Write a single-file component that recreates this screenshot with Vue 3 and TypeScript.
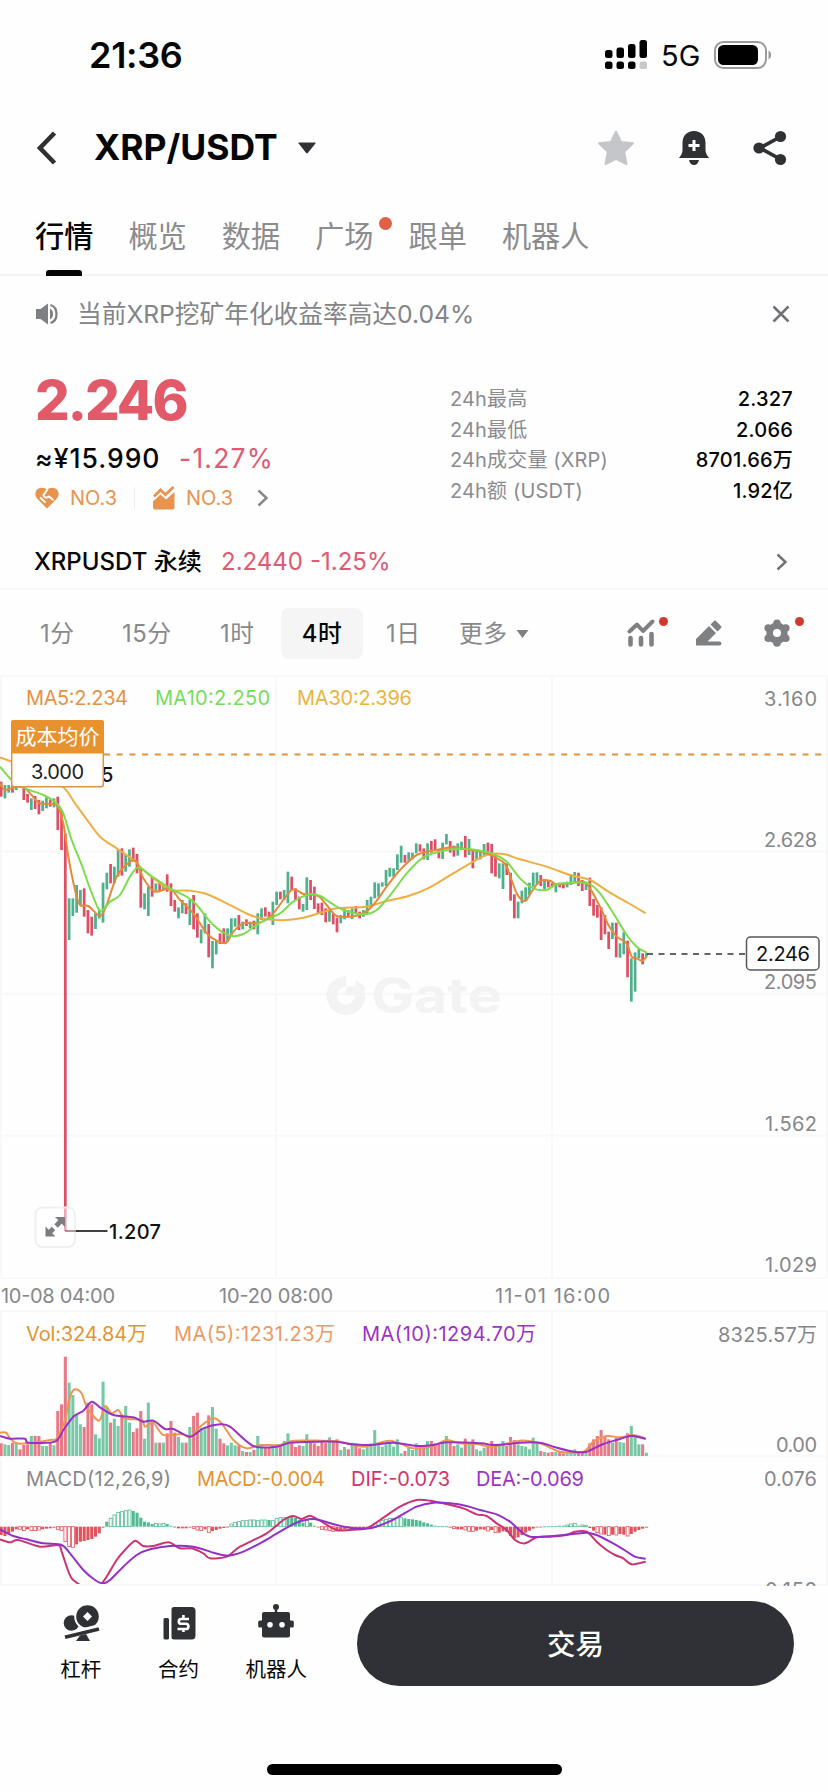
<script setup lang="ts">
type Point = [number, number]

interface Candle {
  x: number
  high: number
  low: number
  up: boolean
  volume: number
}

interface Label {
  text: string
  x: number
  y: number
  width: number
  tone: string
}

const tabs = [
  { name: '行情', active: true, dot: false },
  { name: '概览', active: false, dot: false },
  { name: '数据', active: false, dot: false },
  { name: '广场', active: false, dot: true },
  { name: '跟单', active: false, dot: false },
  { name: '机器人', active: false, dot: false },
]

const stats = [
  { label: '24h最高', value: '2.327' },
  { label: '24h最低', value: '2.066' },
  { label: '24h成交量 (XRP)', value: '8701.66万' },
  { label: '24h额 (USDT)', value: '1.92亿' },
]

const frames = ['1分', '15分', '1时', '4时', '1日']
const activeFrame = '4时'

// One entry per 4h candle: high, low, direction, volume. Units are thirds of a pixel.
const rawCandles =
  '335 380 r 38|345 385 g 35|345 368 g 33|335 368 r 40|340 360 g 38|340 352 r 20|345 390 r 33|372 398 r 35|385 420 g 60|378 417 r 60|' +
  '390 433 r 60|392 423 g 30|382 415 g 30|388 410 r 40|385 412 g 32|380 480 r 135|420 540 r 155|490 1683 r 298|685 810 g 220|685 738 g 183|' +
  '645 728 g 125|660 705 g 95|655 740 r 87|720 790 r 160|740 797 r 155|730 777 g 65|720 745 g 53|638 758 g 223|608 658 g 147|582 640 r 100|' +
  '590 640 g 112|540 620 g 90|535 617 r 120|555 605 g 150|538 590 g 100|533 575 r 72|552 610 r 83|595 713 r 135|670 718 g 52|650 738 g 160|' +
  '620 680 r 105|640 662 g 40|638 663 r 40|645 662 g 40|613 665 r 68|640 708 r 105|690 725 r 70|712 745 g 57|690 730 g 40|700 732 r 40|' +
  '690 765 g 87|675 778 r 120|730 803 r 130|778 820 g 85|730 790 g 85|762 862 r 122|813 895 g 147|812 853 g 82|790 822 r 52|775 822 r 38|' +
  '775 815 g 32|745 797 g 40|745 770 g 32|735 780 r 32|755 778 g 15|748 768 r 12|755 775 g 12|752 778 r 18|730 793 g 60|715 750 g 35|' +
  '712 740 r 25|725 745 r 25|695 765 g 30|665 705 g 35|665 688 r 35|660 690 g 45|605 700 g 68|620 660 r 38|655 690 r 27|680 718 r 32|' +
  '702 725 g 30|622 720 g 65|630 690 r 40|650 717 r 38|700 730 r 30|698 735 r 42|715 757 r 40|720 755 g 56|730 763 r 45|743 787 r 50|' +
  '735 760 g 18|715 748 g 27|720 742 r 20|715 747 g 40|708 732 r 38|725 745 r 23|720 740 g 20|690 732 g 35|680 710 g 38|637 685 g 78|' +
  '640 680 g 32|637 650 g 28|600 648 g 35|593 620 g 40|595 620 g 28|553 600 g 50|527 578 g 8|555 578 r 15|547 575 g 25|548 568 g 18|' +
  '520 550 g 38|523 545 r 30|535 568 r 32|520 570 g 45|513 548 r 45|508 540 r 38|537 565 r 35|518 567 g 42|492 523 g 60|513 548 r 42|' +
  '527 560 r 30|520 557 g 35|515 540 g 25|498 562 r 52|507 555 g 38|538 595 r 50|545 570 g 20|540 568 g 15|522 560 g 25|518 550 r 32|' +
  '522 610 r 45|555 620 r 30|580 625 g 30|580 657 g 45|580 615 r 30|608 692 r 57|673 745 r 48|695 745 g 35|662 700 g 30|652 690 g 28|' +
  '638 675 g 20|608 650 g 55|607 645 g 40|615 648 r 15|630 658 g 12|630 652 r 10|640 652 r 12|640 667 g 12|640 652 r 12|640 655 r 8|' +
  '635 652 g 12|612 645 g 18|606 638 g 20|608 648 r 15|630 663 r 15|635 660 g 15|623 708 r 38|687 737 r 50|705 743 r 60|712 810 r 78|' +
  '735 793 r 60|785 837 r 50|758 807 g 40|758 862 r 55|820 863 g 42|787 853 g 40|812 922 r 68|865 995 g 90|847 965 g 60|837 865 g 35|' +
  '850 883 r 35|848 860 g 10'

const step = 11.32
const candles: Candle[] = rawCandles.split('|').map((row, i) => {
  const [high, low, side, volume] = row.split(' ')
  return { x: 3.5 + i * step, high: +high, low: +low, up: side === 'g', volume: +volume }
})

// MACD columns; a trailing h marks a hollow column.
const rawMacd =
  '-25 -28 -22 -15 -8 -8h -12h -8 -12h -12h -10h -8 -6 -5 -3 -8h -12h -45h -60h -62h -53 -45 -43 -40 -37 -30 -20 -3 ' +
  '15 25h 35h 43h 45h 48h 50h 47 42 27 15 13 8 10h 8h 10h 8 3 -1 -5 -5 -5 0 -5h -10h -12h -8 -17h -13 -10 -6 -4 0 ' +
  '8h 13h 15h 18h 18h 20h 20h 18h 20h 20h 20 18h 25h 27h 27h 28 30 27 20 12 18h 12 3 0 -8h -10h -12h -14h -14 -10 ' +
  '-8 -8h -8 -6 -5 -4 -3 3 10h 15h 18h 22h 25h 25h 27h 27h 25 23 22 20 18 13 10 6 3 1 1 1 -3 -6h -8 -8 -10h -14h ' +
  '-14h -12 -8 -9 -13h -10 -18h -18 -14 -16 -28 -36 -32 -25 -18 -12 -6 -2 -1 1 1 2 2 3 3 5h 8h 10h 3 5h 4h -4 -12 ' +
  '-18h -22h -24 -27h -24 -25h -22 -24 -28h -22 -15 -10 -6 -3'

const macd = rawMacd.split(' ').map((cell, i) => ({
  x: 3.5 + i * step,
  value: parseInt(cell, 10),
  hollow: cell.endsWith('h'),
}))

function parse(source: string): Point[] {
  return source.split(';').map((p) => p.split(',').map(Number) as Point)
}

// Smooths a list of points with a Catmull-Rom spline.
function curve(source: string): string {
  const p = parse(source)
  let d = `M${p[0][0]} ${p[0][1]}`
  for (let i = 0; i < p.length - 1; i++) {
    const a = p[Math.max(0, i - 1)]
    const b = p[i]
    const c = p[i + 1]
    const e = p[Math.min(p.length - 1, i + 2)]
    d += `C${b[0] + (c[0] - a[0]) / 7} ${b[1] + (c[1] - a[1]) / 7} ${c[0] - (e[0] - b[0]) / 7} ${c[1] - (e[1] - b[1]) / 7} ${c[0]} ${c[1]}`
  }
  return d
}

const ma5 = curve(
  '0,340;15,360;50,350;75,355;95,375;120,400;170,405;190,460;205,560;225,660;240,705;265,708;300,738;320,705;350,620;390,575;410,575;430,625;465,665;510,655;540,690;580,730;625,795;675,820;700,785;730,760;780,758;820,730;875,660;910,672;945,675;960,682;980,705;1010,738;1050,740;1090,730;1120,705;1160,650;1200,600;1250,555;1310,540;1360,532;1410,540;1460,550;1500,570;1520,590;1550,670;1575,693;1595,665;1620,633;1650,632;1670,643;1720,638;1750,635;1770,655;1800,710;1825,765;1850,800;1880,820;1895,860;1910,865;1927,872;1940,860',
)
const ma10 = curve(
  '0,290;35,330;75,355;130,375;170,400;190,430;215,510;245,585;270,655;300,722;330,695;360,675;390,620;415,592;450,615;510,655;560,680;590,705;640,765;690,797;730,792;780,758;840,730;880,695;930,673;960,678;995,700;1030,720;1090,733;1130,720;1175,670;1220,610;1270,562;1330,542;1380,536;1430,540;1480,552;1520,575;1560,625;1600,655;1640,660;1670,642;1720,638;1765,640;1800,670;1840,730;1880,795;1910,830;1940,848',
)
const ma30 = curve(
  '0,262;35,275;110,305;190,352;225,400;260,448;300,500;350,535;400,570;430,600;470,632;510,660;570,662;620,672;680,700;750,735;800,748;860,750;910,743;960,729;1010,715;1100,710;1160,693;1225,678;1290,652;1360,610;1420,575;1460,555;1510,552;1560,568;1640,590;1710,615;1770,630;1830,668;1890,702;1937,730',
)
const vol5 = curve(
  '0,308;18,308;30,325;50,340;85,340;150,330;170,325;195,270;210,200;225,178;245,190;260,230;297,272;315,228;335,250;355,240;375,265;425,270;435,290;460,278;490,315;545,312;570,322;600,290;640,265;665,280;700,330;740,355;780,345;840,345;880,332;960,332;1020,335;1090,350;1170,332;1240,355;1300,348;1340,330;1380,340;1430,342;1480,350;1560,332;1620,340;1680,365;1750,365;1780,335;1820,318;1860,322;1900,315;1937,325',
)
const vol10 = curve(
  '0,318;30,326;75,326;85,338;165,335;190,300;220,260;250,242;275,215;300,232;340,255;400,262;430,275;460,272;495,297;520,297;570,320;610,295;660,283;690,290;760,348;830,350;870,338;960,335;1010,335;1050,342;1110,345;1180,338;1250,348;1300,345;1340,337;1440,340;1480,345;1520,343;1560,338;1620,338;1660,350;1720,365;1760,365;1810,342;1860,327;1895,317;1937,327',
)
const dif = curve(
  '0,628;30,637;55,630;120,650;175,645;185,665;200,710;215,745;240,765;275,790;310,755;350,690;375,660;405,632;430,648;460,648;505,637;540,655;575,655;610,670;630,685;680,680;720,650;800,610;850,570;880,558;905,567;930,557;960,572;1010,600;1050,600;1100,595;1140,570;1200,530;1250,510;1290,512;1330,520;1390,535;1430,553;1460,558;1490,580;1520,600;1545,630;1575,640;1610,622;1650,620;1700,615;1725,605;1760,605;1790,635;1820,660;1845,675;1870,685;1895,703;1937,695',
)
const dea = curve(
  '0,598;40,618;80,628;130,640;185,645;210,670;250,720;285,750;310,760;330,750;370,710;410,675;450,658;510,648;580,650;640,668;685,677;730,665;780,640;840,605;890,578;940,567;1010,585;1050,593;1110,595;1160,578;1200,558;1250,530;1300,518;1350,520;1400,528;1440,540;1490,553;1530,575;1560,602;1590,620;1660,618;1720,612;1760,608;1790,615;1830,635;1870,658;1905,680;1937,686',
)

const labels: Label[] = [
  { text: 'MA5:2.234', x: 26, y: 705, width: 102, tone: 'c-ma5' },
  { text: 'MA10:2.250', x: 155, y: 705, width: 115, tone: 'c-ma10' },
  { text: 'MA30:2.396', x: 297, y: 705, width: 115, tone: 'c-ma30' },
  { text: '3.160', x: 764, y: 706, width: 53, tone: 'c-axis' },
  { text: '2.628', x: 764, y: 847, width: 53, tone: 'c-axis' },
  { text: '2.095', x: 764, y: 989, width: 53, tone: 'c-axis' },
  { text: '1.562', x: 765, y: 1131, width: 52, tone: 'c-axis' },
  { text: '1.029', x: 765, y: 1272, width: 52, tone: 'c-axis' },
  { text: '10-08 04:00', x: 1, y: 1303, width: 114, tone: 'c-axis' },
  { text: '10-20 08:00', x: 219, y: 1303, width: 114, tone: 'c-axis' },
  { text: '11-01 16:00', x: 495, y: 1303, width: 115, tone: 'c-axis' },
  { text: 'Vol:324.84万', x: 26, y: 1341, width: 121, tone: 'c-vol' },
  { text: 'MA(5):1231.23万', x: 174, y: 1341, width: 161, tone: 'c-vma' },
  { text: 'MA(10):1294.70万', x: 362, y: 1341, width: 174, tone: 'c-purple' },
  { text: '8325.57万', x: 718, y: 1342, width: 99, tone: 'c-axis' },
  { text: '0.00', x: 776, y: 1452, width: 41, tone: 'c-axis' },
  { text: 'MACD(12,26,9)', x: 26, y: 1485.5, width: 145, tone: 'c-axis' },
  { text: 'MACD:-0.004', x: 197, y: 1485.5, width: 128, tone: 'c-vol' },
  { text: 'DIF:-0.073', x: 351, y: 1485.5, width: 99, tone: 'c-dif' },
  { text: 'DEA:-0.069', x: 476, y: 1485.5, width: 108, tone: 'c-purple' },
  { text: '0.076', x: 764, y: 1486, width: 53, tone: 'c-axis' },
  { text: '-0.152', x: 755, y: 1596.5, width: 62, tone: 'c-axis' },
]
</script>

<template>
  <main class="screen">
    <div class="status">
      <span class="clock">21:36</span>
      <div class="status-right">
        <svg width="43" height="30" viewBox="0 0 43 30">
          <g fill="#000">
            <rect x="0" y="10" width="7.5" height="8" rx="2.5" />
            <rect x="11.5" y="7.5" width="7.5" height="10.5" rx="2.5" />
            <rect x="23" y="4" width="7.5" height="14" rx="2.5" />
            <rect x="34.5" y="0" width="7.5" height="18" rx="2.5" />
            <rect x="0" y="21.5" width="7.5" height="7.5" rx="2.5" />
            <rect x="11.5" y="21.5" width="7.5" height="7.5" rx="2.5" />
            <rect x="23" y="21.5" width="7.5" height="7.5" rx="2.5" />
            <rect x="34.5" y="21.5" width="7.5" height="7.5" rx="2.5" fill="#c8c8c8" />
          </g>
        </svg>
        <span class="net">5G</span>
        <svg width="58" height="28" viewBox="0 0 58 28">
          <rect x="1" y="1" width="51" height="26" rx="8.5" fill="none" stroke="#9b9b9b" stroke-width="2" />
          <rect x="4" y="4" width="40" height="20" rx="5.5" />
          <path d="M54.5 9.5c3.5 1 3.500 8 0 9z" fill="#9b9b9b" />
        </svg>
      </div>
    </div>

    <header class="header">
      <svg class="back" width="22" height="34" viewBox="0 0 22 34"><path d="M18.500 2 4 17l14.500 15" fill="none" stroke="#2f3134" stroke-width="4.600" /></svg>
      <h1>XRP/USDT</h1>
      <svg class="caret" width="18" height="12" viewBox="0 0 18 12"><path d="M1 .5h16q1 0 .4 1L10 10.700q-1 1-2 0L.6 1.500Q0 .5 1 .5z" fill="#2f3134" /></svg>
      <div class="header-actions">
        <svg width="38" height="36" viewBox="0 0 38 36"><path d="M19 1.500l5 10.500 12 1.300-8.800 8.500L29.500 34 19 28.800 8.500 34l2.300-12.200L2 13.300 14 12z" fill="#c4c6ca" stroke="#c4c6ca" stroke-width="2" stroke-linejoin="round" /></svg>
        <svg width="32" height="36" viewBox="0 0 32 36">
          <path d="M16 1c7 0 11.500 5 11.500 11.500V20c0 3.500 1.500 5 3.500 8H1c2-3 3.500-4.500 3.500-8v-7.500C4.500 6 9 1 16 1zM11 30h10c-.5 3-2.500 5-5 5s-4.500-2-5-5z" fill="#2f3134" />
          <path d="M16 10v11M10.500 15.500h11" stroke="#fff" stroke-width="3" />
        </svg>
        <svg width="34" height="36" viewBox="0 0 34 36">
          <path d="M27 7 7 18l20 11" fill="none" stroke="#2f3134" stroke-width="3.600" />
          <circle cx="27.500" cy="6.500" r="5.600" fill="#2f3134" /><circle cx="6" cy="18" r="5.600" fill="#2f3134" /><circle cx="27.500" cy="29.500" r="5.600" fill="#2f3134" />
        </svg>
      </div>
    </header>

    <nav class="tabs">
      <div v-for="tab in tabs" :key="tab.name" class="tab" :class="{ active: tab.active }">
        {{ tab.name }}<i v-if="tab.dot" class="tab-dot"></i>
      </div>
    </nav>

    <div class="notice">
      <svg width="24" height="22" viewBox="0 0 24 22">
        <path d="M0 6h4.500L12 .5v21L4.500 16H0z" fill="#7e8083" />
        <path d="M14 5.500c4 2 4 9 0 11z" fill="#7e8083" />
        <path d="M14.500 2c8 2.500 8 15.500 0 18" fill="none" stroke="#7e8083" stroke-width="2.300" />
      </svg>
      <span class="notice-text">当前XRP挖矿年化收益率高达0.04%</span>
      <svg class="close" width="18" height="18" viewBox="0 0 18 18"><path d="M1.500 1.500l15 15m0-15l-15 15" stroke="#707276" stroke-width="2.500" /></svg>
    </div>

    <section class="summary">
      <div class="price-block">
        <div class="price">2.246</div>
        <div class="fiat"><span class="fiat-value">≈¥15.990</span><span class="change">-1.27%</span></div>
        <div class="ranks">
          <svg width="24" height="22" viewBox="0 0 24 22">
            <path d="M12 21.500 2.500 12C-1 8.500 0 3 4 1.300 7 0 10 .8 12 3c2-2.200 5-3 8-1.700 4 1.700 5 7.200 1.500 10.700z" fill="#e8934e" />
            <path d="M12.500 2.500 8.500 8c.5 2.800 3 3.200 5.500 1.500l4.500 3.700M5 10.500l5.500 5" fill="none" stroke="#fff" stroke-width="2" />
          </svg>
          <span class="rank">NO.3</span>
          <i class="rule"></i>
          <svg width="22" height="24" viewBox="0 0 22 24">
            <path d="M1 10.500 7.500 4l5 4.500L20.500 1" fill="none" stroke="#e8934e" stroke-width="2.800" />
            <path d="M0 15.500 7.500 8.500l5.500 5L21.500 6v15.500q0 2-2 2h-17.500q-2 0-2-2z" fill="#e8934e" />
          </svg>
          <span class="rank">NO.3</span>
          <svg class="rank-more" width="12" height="18" viewBox="0 0 12 18"><path d="M1.500 1.500l8 7.500-8 7.500" fill="none" stroke="#85878a" stroke-width="2.400" /></svg>
        </div>
      </div>
      <dl class="stats">
        <div v-for="row in stats" :key="row.label" class="stat">
          <dt>{{ row.label }}</dt>
          <dd>{{ row.value }}</dd>
        </div>
      </dl>
    </section>

    <div class="perp">
      <span class="perp-name">XRPUSDT 永续</span>
      <span class="perp-price">2.2440</span>
      <span class="perp-change">-1.25%</span>
      <svg class="perp-more" width="12" height="18" viewBox="0 0 12 18"><path d="M1.500 1.500l8 7.500-8 7.500" fill="none" stroke="#707276" stroke-width="2.400" /></svg>
    </div>

    <div class="frames">
      <span v-for="(f, i) in frames" :key="f" class="frame" :class="['f' + i, { on: f === activeFrame }]">{{ f }}</span>
      <span class="frame more">更多</span>
      <svg class="more-caret" width="13" height="10" viewBox="0 0 13 10"><path d="M.5 1h12L6.500 9z" fill="#7e8083" /></svg>
      <div class="tools">
        <span class="tool">
          <svg width="28" height="28" viewBox="0 0 28 28">
            <path d="M2.500 12.500 10 5.500l6 6.500L25.500 2.500" fill="none" stroke="#7e8083" stroke-width="4" stroke-linejoin="round" stroke-linecap="round" />
            <path d="M3.500 19v6.500M14 19v6.500M24.500 15v10.500" stroke="#7e8083" stroke-width="4.600" stroke-linecap="round" />
          </svg>
          <i class="tool-dot"></i>
        </span>
        <span class="tool">
          <svg width="28" height="28" viewBox="0 0 28 28">
            <path d="M1 26.500V20L14 7l7 7-8.500 8.500H24q2.500 0 2.500 2t-2.500 2zM15.500 5.500 19 2q1-1 2 0l5 5q1 1 0 2l-3.500 3.500z" fill="#7e8083" />
          </svg>
        </span>
        <span class="tool">
          <svg width="28" height="28" viewBox="0 0 28 28">
            <path d="M14 3.500 23 9v10.500L14 24.500 5 19.500V9z" fill="#7e8083" stroke="#7e8083" stroke-width="3" />
            <g fill="#7e8083"><circle cx="14" cy="4.200" r="3.800" /><circle cx="22.800" cy="9" r="3.800" /><circle cx="22.800" cy="19.200" r="3.800" /><circle cx="14" cy="24" r="3.800" /><circle cx="5.200" cy="19.200" r="3.800" /><circle cx="5.200" cy="9" r="3.800" /></g>
            <circle cx="14" cy="14" r="4" fill="#fff" />
          </svg>
          <i class="tool-dot"></i>
        </span>
      </div>
    </div>

    <svg class="chart" width="828" height="916" viewBox="0 670 828 916">
      <g stroke="#f8f8f9" stroke-width="2">
        <path d="M0 676H828M0 851.500H828M0 993.700H828M0 1135.500H828M0 1278H828M0 1311H828M0 1456.500H828M0 1585H828" />
        <path d="M1 676V1278M276 676V1278M552 676V1278M827 676V1278M1 1311V1585M276 1311V1585M552 1311V1585M827 1311V1585" />
      </g>

      <g fill="#f3f3f4">
        <path d="M346 976a19.500 19.500 0 1 0 19.500 19.500H355a9 9 0 1 1-9-9z" />
        <path d="M346 986.500h9.500v9H346zM355.500 979l9 7v9.500h-9z" />
        <text class="watermark" x="371" y="1012.500" textLength="131" lengthAdjust="spacingAndGlyphs">Gate</text>
      </g>

      <g transform="translate(0 670) scale(.333333)">
        <rect v-for="(c, i) in candles" :key="'k' + i" :x="c.x - 4.1" :y="c.high" width="8.200" :height="c.low - c.high" :fill="c.up ? '#4fb18c' : '#de4f65'" />
        <g fill="none" stroke-width="6" stroke-linejoin="round">
          <path :d="ma30" stroke="#efae42" />
          <path :d="ma5" stroke="#e58a3a" />
          <path :d="ma10" stroke="#7ddc4c" />
        </g>
      </g>

      <g transform="translate(0 1330) scale(.333333)">
        <rect v-for="(c, i) in candles" :key="'v' + i" :x="c.x - 4.600" :y="378 - c.volume" width="9.200" :height="c.volume" :fill="c.up ? '#77c9a5' : '#e87987'" />
        <g fill="none" stroke-width="6" stroke-linejoin="round">
          <path :d="vol5" stroke="#ec9654" />
          <path :d="vol10" stroke="#9b30c4" />
        </g>
        <template v-for="(m, i) in macd" :key="'m' + i">
          <rect
            :x="m.x - (m.hollow ? 4.200 : 4.600)"
            :y="m.value > 0 ? 590 - m.value : 590"
            :width="m.hollow ? 8.800 : 9.200"
            :height="Math.max(2.500, Math.abs(m.value))"
            :fill="m.hollow ? '#fff' : m.value > 0 ? '#4fbb90' : '#e1525c'"
            :stroke="m.hollow ? (m.value > 0 ? '#4fbb90' : '#e1525c') : 'none'"
            stroke-width="2.400"
          />
        </template>
        <g fill="none" stroke-width="6" stroke-linejoin="round">
          <path :d="dif" stroke="#cc3372" />
          <path :d="dea" stroke="#9330c8" />
        </g>
      </g>
      <rect x="70" y="1584" width="40" height="3" fill="#f8f8f9" />

      <text class="c-black" x="101" y="782">5</text>
      <path d="M104 754.500H828" stroke="#e29140" stroke-width="1.800" stroke-dasharray="6 6.700" />
      <rect x="11.700" y="720.700" width="91.600" height="66" rx="2.500" fill="#fff" stroke="#e29140" stroke-width="1.500" />
      <path d="M11 753.500V722.500q0-2.500 2.500-2.500h88q2.500 0 2.500 2.500V753.500z" fill="#e8912f" />
      <text class="cost-title" x="15.500" y="743.500" textLength="84">成本均价</text>
      <text class="cost-value" x="31" y="779" textLength="53">3.000</text>

      <rect x="35.500" y="1207.500" width="39.500" height="39.500" rx="7" fill="#fff" fill-opacity=".5" stroke="#f0f0f1" stroke-width="2" />
      <path d="M55 1217h10v10l-3.300-3.300-4 4-3.400-3.400 4-4zM45.500 1236.500v-10l3.300 3.300 3-3 3.400 3.400-3 3 3.300 3.300z" fill="#7b7d80" />
      <path d="M65 1231H77" stroke="#9d5560" stroke-width="1.300" />
      <path d="M76 1231H107.500" stroke="#111" stroke-width="1.600" />
      <text class="c-black" x="109" y="1238.500" textLength="52">1.207</text>

      <text v-for="l in labels" :key="l.text" :class="l.tone" :x="l.x" :y="l.y" :textLength="l.width">{{ l.text }}</text>

      <path d="M647 954H746" stroke="#333" stroke-width="1.500" stroke-dasharray="6 5.500" />
      <rect x="746.500" y="937" width="72.500" height="33" rx="4" fill="#fff" stroke="#55575a" stroke-width="1.500" />
      <text class="c-black tag" x="756" y="961" textLength="54">2.246</text>
    </svg>

    <footer class="footer">
      <div class="entry">
        <svg width="40" height="40" viewBox="0 0 40 40">
          <circle cx="10.500" cy="22" r="7.800" fill="#2f3134" /><circle cx="26.500" cy="15.500" r="12.300" fill="#2f3134" stroke="#fefefe" stroke-width="2" />
          <path d="M26.500 11 31 15.500 26.500 20 22 15.500z" fill="#fff" />
          <path d="M2 36 39 26.500" stroke="#fefefe" stroke-width="7" /><path d="M4 36.200 38 28" stroke="#2f3134" stroke-width="3.600" />
          <path d="M19 34.500l6-1.500 4 7H15z" fill="#2f3134" />
        </svg>
        <span>杠杆</span>
      </div>
      <div class="entry">
        <svg width="40" height="40" viewBox="0 0 40 40">
          <rect x="4.500" y="17" width="5.500" height="21.500" rx="1.500" fill="#2f3134" />
          <path d="M15 6h17.500q4 0 4 4v24.500q0 4-4 4H15q-2.500 0-2.500-2.500V8.500q0-2.500 2.500-2.500z" fill="#2f3134" />
          <path d="M30 18h-7.800a2.400 2.400 0 0 0 0 4.800h4.600a2.600 2.600 0 0 1 0 5.200H18.500M24.400 14v4M24.400 28v3" fill="none" stroke="#fff" stroke-width="2.600" />
        </svg>
        <span>合约</span>
      </div>
      <div class="entry">
        <svg width="40" height="40" viewBox="0 0 40 40">
          <circle cx="20" cy="6" r="3" fill="#2f3134" /><path d="M20 5v8" stroke="#2f3134" stroke-width="2.400" />
          <rect x="6" y="11" width="28" height="25.500" rx="2" fill="#2f3134" /><rect x="2.200" y="19.500" width="35.600" height="7" rx="1.500" fill="#2f3134" />
          <circle cx="14" cy="23.800" r="2.800" fill="#fff" /><circle cx="26" cy="23.800" r="2.800" fill="#fff" />
        </svg>
        <span>机器人</span>
      </div>
      <button class="trade">交易</button>
    </footer>
    <div class="home"></div>
  </main>
</template>

<style>
body { background: #fff; }
</style>

<style scoped>
* { box-sizing: border-box; }
.screen {
  width: 828px;
  height: 1792px;
  overflow: hidden;
  display: flex;
  flex-direction: column;
  background: #fefefe;
  color: #060606;
  font-family: Inter, "Noto Sans CJK SC", sans-serif;
}
.screen > * { flex: none; }
svg { display: block; flex: none; }

.status { height: 110px; padding: 0 56px 0 89px; display: flex; justify-content: space-between; align-items: center; }
.clock { font-size: 36px; font-weight: 600; letter-spacing: -0.3px; }
.status-right { display: flex; align-items: center; }
.net { width: 66px; padding-left: 13px; font-size: 29px; }

.header { height: 76px; padding: 0 41px 0 36px; display: flex; align-items: center; }
h1 { margin: 0 0 0 36px; width: 204px; font-size: 35.5px; line-height: 44px; font-weight: 700; letter-spacing: 0; }
.header-actions { margin-left: auto; display: flex; gap: 43px; }

.tabs { height: 90px; border-bottom: 2px solid #f4f4f5; padding: 0 35px; display: flex; gap: 35px; color: #8b8c8e; }
.tab { position: relative; height: 90px; font-size: 29.2px; line-height: 101px; }
.tab.active { color: #060606; font-weight: 500; }
.tab.active::after { content: ""; position: absolute; left: 11px; bottom: 0; width: 36px; height: 6px; border-radius: 3px 3px 0 0; background: #060606; }
.tab-dot { position: absolute; right: -18px; top: 31px; width: 13px; height: 13px; border-radius: 50%; background: #e05f49; }

.notice { height: 76px; padding: 0 38px 0 36px; display: flex; align-items: center; color: #828487; }
.notice-text { margin-left: 17px; font-size: 24.7px; line-height: 36px; }
.close { margin-left: auto; }

.summary { height: 171px; padding: 0 35px; display: flex; justify-content: space-between; }
.price-block { padding-top: 14px; }
.price { height: 68px; line-height: 68px; font-size: 54.5px; font-weight: 800; letter-spacing: -2px; color: #e25a69; }
.fiat { height: 50px; line-height: 48px; font-size: 26.5px; display: flex; }
.fiat-value { width: 144px; font-weight: 500; letter-spacing: 1px; }
.change { color: #de5a70; letter-spacing: 1.2px; }
.ranks { height: 28px; display: flex; align-items: center; color: #e8934e; font-size: 20px; }
.rank { width: 46px; margin-left: 11px; }
.rule { width: 1px; height: 22px; margin: 0 18px 0 18px; background: #eee; }
.rank-more { margin-left: 25px; }
.stats { width: 343px; margin: 0; padding-top: 32px; }
.stat { height: 30.5px; line-height: 30px; display: flex; justify-content: space-between; font-size: 20px; }
dt { color: #8b8c8f; letter-spacing: 0.15px; }
dd { margin: 0; font-weight: 500; letter-spacing: 0.2px; }

.perp { height: 67px; border-bottom: 2px solid #f6f6f7; padding: 12px 40px 0 34px; display: flex; align-items: center; font-size: 24px; line-height: 36px; }
.perp-name { width: 187px; font-weight: 500; white-space: nowrap; }
.perp-price { width: 89px; color: #de5a70; }
.perp-change { color: #de5a70; }
.perp-more { margin-left: auto; }

.frames { height: 80px; padding: 0 0 0 40px; display: flex; align-items: center; color: #87898c; font-size: 23.8px; }
.frame { height: 51px; margin-top: 6px; line-height: 51px; white-space: nowrap; letter-spacing: 0.5px; }
.f0 { width: 82px; }
.f1 { width: 98px; }
.f2 { width: 61px; }
.f3 { width: 82px; text-align: center; }
.f4 { width: 73px; padding-left: 23px; }
.frame.on { color: #060606; font-weight: 500; background: #f5f5f5; border-radius: 8px; }
.more { margin-left: 23px; width: 57px; }
.more-caret { margin-top: 7px; }
.tools { margin-left: auto; margin-right: 37px; margin-top: 5px; display: flex; gap: 40px; }
.tool { position: relative; }
.tool-dot { position: absolute; left: 32px; top: -2px; width: 9px; height: 9px; border-radius: 50%; background: #d03a2e; }

.chart text { font-size: 20px; }
.chart .watermark { font-size: 49px; font-weight: 700; }
.c-axis { fill: #85878a; }
.c-ma5 { fill: #e29346; }
.c-ma10 { fill: #74dd58; }
.c-ma30 { fill: #ecb340; }
.c-vol { fill: #e39431; }
.c-vma { fill: #eb9a62; }
.c-purple { fill: #9a33c8; }
.c-dif { fill: #cf3470; }
.c-black { fill: #111; font-weight: 500; }
.c-black.tag { font-weight: 400; }
.chart .cost-title { font-size: 21px; fill: #fff; }
.cost-value { fill: #222; }

.footer { height: 100px; padding: 15px 34px 0 32px; display: flex; }
.entry { width: 97.7px; display: flex; flex-direction: column; align-items: center; font-size: 20.5px; }
.entry span { margin-top: 14px; line-height: 30px; }
.trade { margin-left: auto; width: 437px; height: 85px; padding: 0 0 3px; border: 0; border-radius: 43px; background: #303136; color: #fff; font: 500 28.500px "Noto Sans CJK SC", sans-serif; }
.home { width: 295px; height: 11px; margin: 78px auto 0; border-radius: 6px; background: #000; }
</style>
